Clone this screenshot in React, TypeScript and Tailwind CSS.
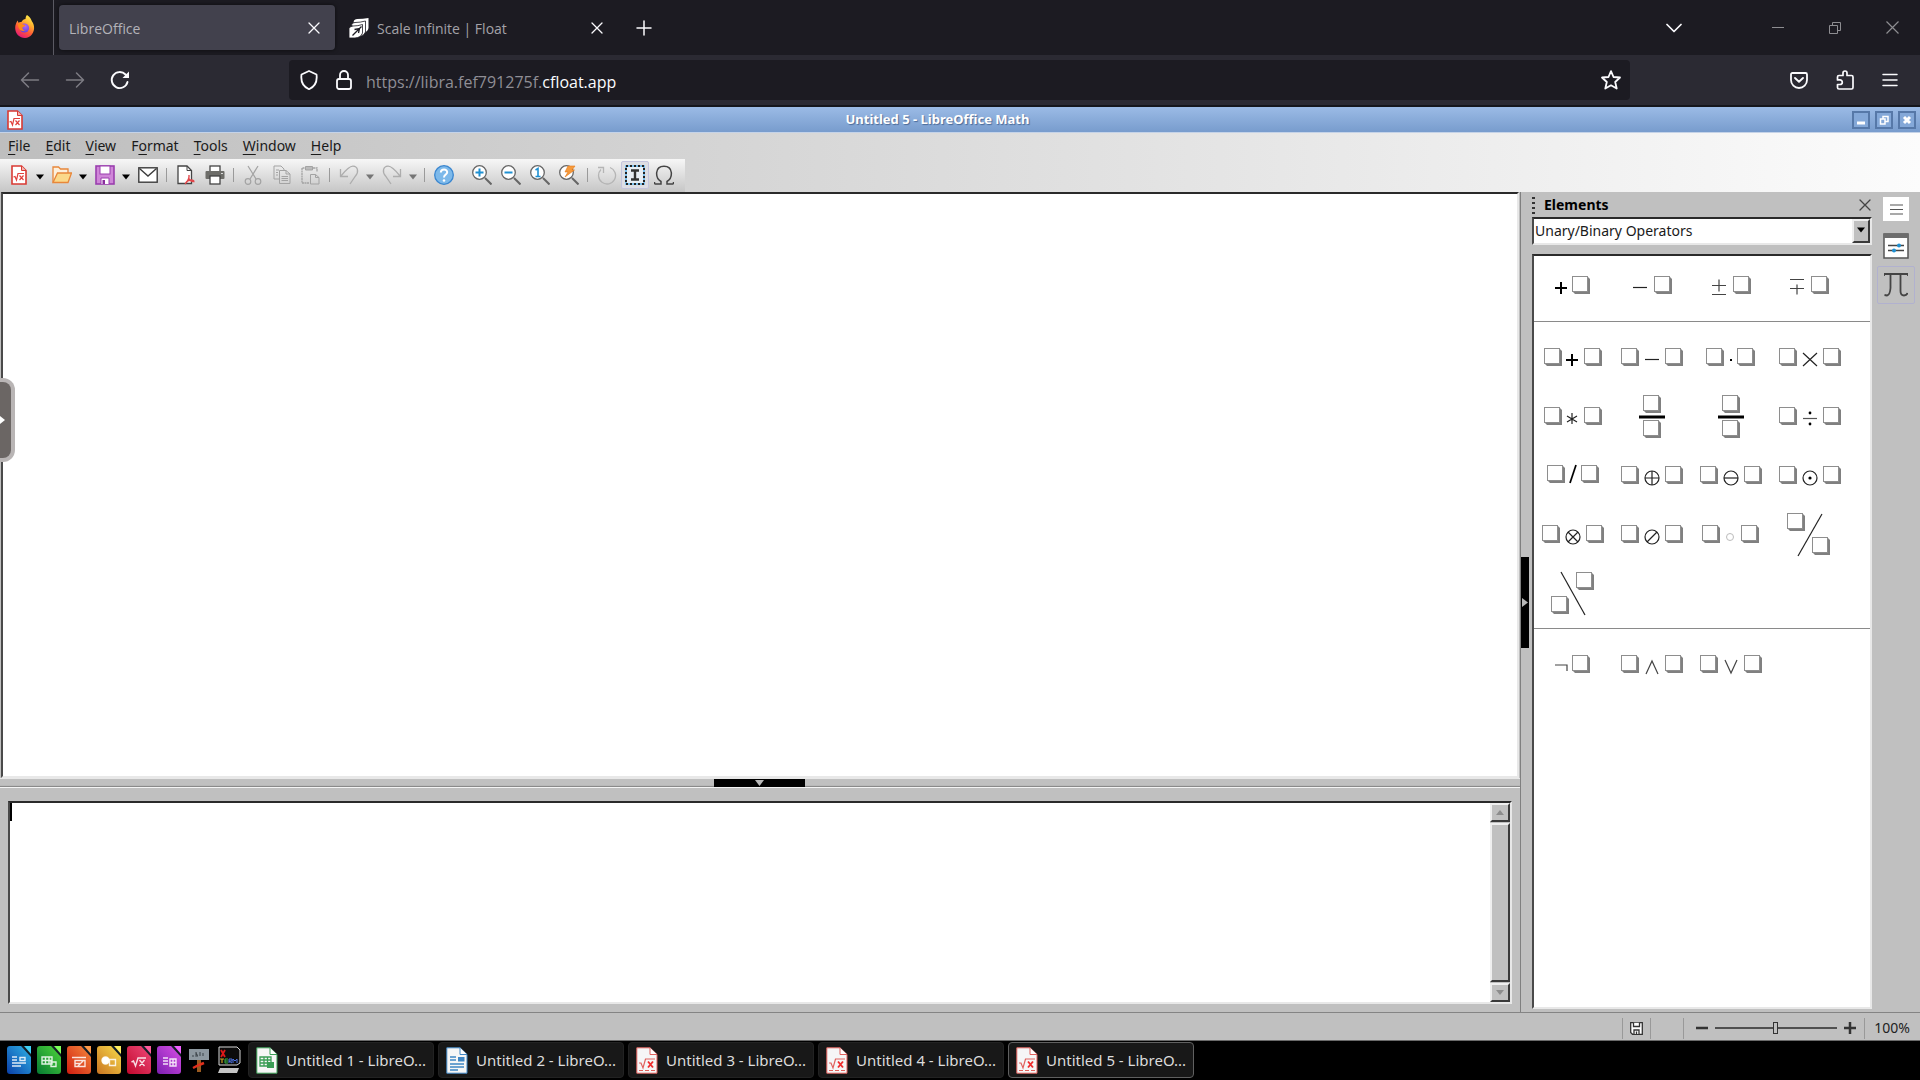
import React from 'react';

const ui = "font-['Noto_Sans','Open_Sans',sans-serif]";
const chrome = "font-['Open_Sans','Noto_Sans',sans-serif]";

/* ---------- Browser icons ---------- */

const FirefoxIcon = () => (
  <svg width="22" height="26" viewBox="0 0 22 26">
    <defs>
      <linearGradient id="fxBody" x1="0.8" y1="0" x2="0.3" y2="1">
        <stop offset="0" stopColor="#fff44f" />
        <stop offset="0.35" stopColor="#ffb02e" />
        <stop offset="0.65" stopColor="#ff5a36" />
        <stop offset="1" stopColor="#e3167a" />
      </linearGradient>
      <radialGradient id="fxCore" cx="0.6" cy="0.3" r="0.8">
        <stop offset="0" stopColor="#b067f5" />
        <stop offset="1" stopColor="#5a3fd6" />
      </radialGradient>
    </defs>
    <path d="M13 0c3 2 4 4 5 6.500c1 1 1.800 3 2 5c.8 6-3.500 11.500-9 11.500S1.200 18.700 1.200 13c0-3 1-5.500 2.600-7.500l.6 2.300c.9-.6 1.800-.8 3-.7C8.500 5 10 4 11.500 4c0-1.500.5-3 1.500-4z" fill="url(#fxBody)" />
    <circle cx="10.500" cy="13" r="4.600" fill="url(#fxCore)" />
    <path d="M4 9c2-1.500 4-.6 5 .6l2.500.4c-.5 1.600-2.200 1.700-3 2.300c-.5 1.500.5 3 2.500 3.200c-3 1.500-7-.500-7-6.500z" fill="#ff8a16" />
  </svg>
);

const FloatIcon = () => (
  <svg width="20" height="20" viewBox="0 0 20 20">
    <path d="M5 2.500Q6 1 8 1Q14 1 19.500 0V10Q19 13 15.500 14.500V5Q10 5.500 4.500 4.500Z" fill="#fff" />
    <path d="M2.500 7Q3 4.500 6 4.500Q11 4.500 16.500 3V14Q15.500 17 12 18Z" fill="#fff" stroke="#1c1b22" strokeWidth=".8" />
    <path d="M0 10.500Q1 8 4 8Q9 8 13.500 6.500V15Q12 19.500 6 20H0Z" fill="#fff" stroke="#1c1b22" strokeWidth=".8" />
    <path d="M3.500 17.500 12.500 8.500M5.500 11.500 10.500 10.500 9.500 15" fill="none" stroke="#1c1b22" strokeWidth="1.300" />
  </svg>
);

const line = { fill: 'none', stroke: 'currentColor', strokeWidth: 1.5, strokeLinecap: 'round', strokeLinejoin: 'round' } as const;

const XIcon = ({ size = 12 }: { size?: number }) => (
  <svg width={size} height={size} viewBox="0 0 12 12"><path d="M1 1 11 11M11 1 1 11" {...line} strokeWidth="1.300" /></svg>
);
const PlusIcon = () => (
  <svg width="16" height="16" viewBox="0 0 16 16"><path d="M8 1V15M1 8H15" {...line} /></svg>
);
const ArrowIcon = ({ flip = false }: { flip?: boolean }) => (
  <svg width="20" height="18" viewBox="0 0 20 18">
    <path d={flip ? 'M1.500 9H18.500M11.500 2 18.500 9 11.500 16' : 'M18.500 9H1.500M8.500 2 1.500 9 8.500 16'} {...line} />
  </svg>
);
const ReloadIcon = () => (
  <svg width="20" height="20" viewBox="0 0 20 20">
    <path d="M17.500 12A8 8 0 1 1 15.500 4.500L17.500 6.500" {...line} strokeWidth="1.900" />
    <path d="M19 1.500V8H12.500Z" fill="currentColor" />
  </svg>
);
const ShieldIcon = () => (
  <svg width="20" height="20" viewBox="0 0 20 20"><path d="M10 1 17.500 4.500C18.500 12 15 17 10 19.200C5 17 1.500 12 2.500 4.500Z" {...line} strokeWidth="1.800" /></svg>
);
const LockIcon = () => (
  <svg width="16" height="20" viewBox="0 0 16 20">
    <rect x="1" y="9" width="14" height="10" rx="2" {...line} strokeWidth="1.800" />
    <path d="M4 9V5a4 4 0 0 1 8 0V9" {...line} strokeWidth="1.800" />
  </svg>
);
const StarIcon = () => (
  <svg width="20" height="20" viewBox="0 0 20 20"><path d="M10 1.200 12.500 7 19 7.500 14.200 12 15.700 18.500 10 15.300 4.300 18.500 5.800 12 1 7.500 7.500 7Z" {...line} strokeWidth="1.800" /></svg>
);
const PocketIcon = () => (
  <svg width="18" height="17" viewBox="0 0 18 17">
    <path d="M2.500 1H15.500Q17 1 17 2.500V8A8 8 0 0 1 1 8V2.500Q1 1 2.500 1Z" {...line} strokeWidth="1.800" />
    <path d="M5 6 9 9.700 13 6" {...line} strokeWidth="1.900" />
  </svg>
);
const PuzzleIcon = () => (
  <svg width="18" height="20" viewBox="0 0 18 20">
    <path d="M7 5.500V3a2 2 0 0 1 4 0V5.500H15.500Q17 5.500 17 7V17.500Q17 19 15.500 19H3Q1.500 19 1.500 17.500V14.500H4a2.300 2.300 0 0 0 0-4.600H1.500V7Q1.500 5.500 3 5.500Z" {...line} strokeWidth="1.700" />
  </svg>
);

/* ---------- Office icons ---------- */

const MathDoc = () => (
  <svg width="16" height="20" viewBox="0 0 16 20">
    <path d="M1 1H10.500L15 5.500V19H1Z" fill="#fff" stroke="#d93a33" strokeWidth="1.600" />
    <path d="M10.500 1V5.500H15" fill="#f3b5b1" stroke="#d93a33" />
    <path d="M2.500 12 4 11.500 5.500 15 7 8.500H13M8.500 10.500 12.500 15M12.500 10.500 8.500 15" fill="none" stroke="#e0403c" strokeWidth="1.200" />
  </svg>
);

const Caret = ({ muted = false }: { muted?: boolean }) => (
  <svg width="8" height="6" viewBox="0 0 8 6"><path d="M0 .5H8L4 5.500Z" fill={muted ? '#757575' : '#000'} /></svg>
);

const FolderIcon = () => (
  <svg width="20" height="18" viewBox="0 0 20 18">
    <path d="M1 16.500V1H6.500L8.500 3H16V7" fill="#fdf0dc" stroke="#e8873a" strokeWidth="1.300" />
    <path d="M1 16.500 5.500 7H19.500L16 16.500Z" fill="#fbd98a" stroke="#e8873a" strokeWidth="1.300" />
  </svg>
);
const SaveIcon = () => (
  <svg width="20" height="20" viewBox="0 0 20 20">
    <rect x="1" y="1" width="18" height="18" fill="#cf86d8" stroke="#9a3fae" strokeWidth="1.600" />
    <rect x="5" y="1" width="10" height="8" fill="#fff" stroke="#9a3fae" />
    <path d="M6 19V13H14V19" fill="#fff" stroke="#9a3fae" />
    <rect x="7.500" y="15" width="2.500" height="4" fill="#8a2f9e" />
  </svg>
);
const MailIcon = () => (
  <svg width="20" height="16" viewBox="0 0 20 16">
    <rect x=".8" y=".8" width="18.400" height="14.400" fill="#fff" stroke="#3c3c3c" strokeWidth="1.400" />
    <path d="M1.500 1.500 10 9 18.500 1.500" fill="none" stroke="#3c3c3c" strokeWidth="1.400" />
  </svg>
);
const PdfIcon = () => (
  <svg width="18" height="20" viewBox="0 0 18 20">
    <path d="M1 1H10L14.500 5.500V18.500H1Z" fill="#fff" stroke="#444" strokeWidth="1.300" />
    <path d="M10 1V5.500H14.500" fill="none" stroke="#444" />
    <path d="M8 19C11 16 12.500 13 12 10M11.500 13C13 16 15 17 17.500 16.500M9 17C12 15 15 14.500 17 16" fill="none" stroke="#e2474b" strokeWidth="1.400" />
  </svg>
);
const PrintIcon = () => (
  <svg width="20" height="20" viewBox="0 0 20 20">
    <rect x="5" y="1" width="10" height="6" fill="#fff" stroke="#444" strokeWidth="1.300" />
    <rect x=".5" y="6" width="19" height="8" rx="1" fill="#6d6d69" />
    <rect x="5" y="11" width="10" height="8" fill="#fff" stroke="#444" strokeWidth="1.300" />
    <rect x="16" y="8" width="2" height="1" fill="#ddd" />
  </svg>
);
const CutIcon = () => (
  <svg width="18" height="20" viewBox="0 0 18 20" fill="none" stroke="#a3a3a3" strokeWidth="1.200">
    <path d="M4 1 12 14M14 1 6 14" /><circle cx="4" cy="16.500" r="2.800" /><circle cx="14" cy="16.500" r="2.800" />
  </svg>
);
const CopyIcon = () => (
  <svg width="18" height="20" viewBox="0 0 18 20" fill="none" stroke="#a3a3a3">
    <path d="M6 14H1V1H8L11 4V5" /><path d="M6.500 5.500H13L17 9V18.500H6.500ZM13 5.500V9H17M8.500 11.500H15M8.500 13.500H15M8.500 15.500H15M3 5H6M3 7.500H5M3 10H5" />
  </svg>
);
const PasteIcon = () => (
  <svg width="19" height="20" viewBox="0 0 19 20" fill="none" stroke="#a3a3a3">
    <path d="M8 18H1V3H4M12 3H16V7" strokeDasharray="2 .5" strokeWidth="1.300" /><path d="M4.500 1.500H11.500V5H4.500Z" fill="#bbb" /><path d="M9.500 9.500H14.500L18 12.500V19H9.500ZM14.500 9.500V12.500H18" />
  </svg>
);
const UndoIcon = ({ flip = false }: { flip?: boolean }) => (
  <svg width="20" height="20" viewBox="0 0 20 20">
    <path d={flip ? 'M18.500 4V11.500H11M18 11C14 6 10 1 6 1.200C1 1.500 0 7 3.500 11L9 19' : 'M1.500 4V11.500H9M2 11C6 6 10 1 14 1.200C19 1.500 20 7 16.500 11L11 19'} fill="none" stroke="#adadad" strokeWidth="1.300" />
  </svg>
);
const HelpIcon = () => (
  <svg width="20" height="20" viewBox="0 0 20 20">
    <circle cx="10" cy="10" r="9.300" fill="#7db9ea" stroke="#3a86cf" strokeWidth="1.300" />
    <path d="M6.800 7.500C7 3.500 13.200 3.500 13.200 7.300C13.200 9.500 10 9.800 10 12.500" fill="none" stroke="#fff" strokeWidth="2" />
    <circle cx="10" cy="15.500" r="1.300" fill="#fff" />
  </svg>
);

const Lens = ({ children }: { children: React.ReactNode }) => (
  <svg width="20" height="20" viewBox="0 0 20 20">
    <path d="M13 13 19.500 19.500" stroke="#666" strokeWidth="2" />
    <circle cx="7.500" cy="7.500" r="6.800" fill="#fff" stroke="#666" strokeWidth="1.300" />
    {children}
  </svg>
);
const RefreshIcon = () => (
  <svg width="20" height="20" viewBox="0 0 20 20" fill="none" stroke="#b5b5b5" strokeWidth="1.300">
    <path d="M13 2.500A8.500 8.500 0 1 1 4 4.500M1 2.500H6.500V8" />
  </svg>
);
const FormulaCursorIcon = () => (
  <svg width="20" height="20" viewBox="0 0 20 20">
    <rect x="1" y="1" width="18" height="18" fill="#e9eef4" stroke="#7cc0ee" strokeWidth="2" />
    <rect x="1" y="1" width="18" height="18" fill="none" stroke="#222" strokeWidth="2" strokeDasharray="2 2" />
    <path d="M6 5.500H14M6 14.500H14M10 5V15" stroke="#333" strokeWidth="2.400" />
  </svg>
);
const OmegaIcon = () => (
  <svg width="20" height="20" viewBox="0 0 20 20">
    <path d="M.5 19H7V16.500C1 13 .500 1.200 10 1.200S19 13 13 16.500V19H19.500M.5 19V17M19.500 19V17" fill="none" stroke="#444" strokeWidth="1.500" />
  </svg>
);

/* ---------- Operator previews ---------- */

const Box = ({ x, y = -10 }: { x: number; y?: number }) => (
  <g transform={`translate(${x} ${y})`}>
    <path d="M1 15H15V1H16L18 3V18H3L1 16Z" fill="#808080" />
    <rect x=".5" y=".5" width="15" height="15" fill="#fff" stroke="#8e8e8e" />
  </g>
);

const thin = { fill: 'none', stroke: '#222', strokeWidth: 1.2 };
const Pair = ({ l = -31, r = 13, y = -10, children }: { l?: number; r?: number; y?: number; children: React.ReactNode }) => (
  <><Box x={l} y={y} />{children}<Box x={r} y={y} /></>
);

interface Operator { name: string; art: React.ReactNode }

const unary: Operator[] = [
  { name: '+ Sign', art: <><path d="M-18 2H-6M-12 -4V8" {...thin} stroke="#000" strokeWidth="2" /><Box x={-1} /></> },
  { name: '- Sign', art: <><path d="M-19 1.500H-5" {...thin} /><Box x={2} /></> },
  { name: '+- Sign', art: <><path d="M-19 -.5H-5M-12 -6.500V5.500M-19 8.500H-5" {...thin} stroke="#444" /><Box x={2} /></> },
  { name: '-+ Sign', art: <><path d="M-20 -6.500H-6M-20 2.500H-6M-13 -1.500V8.500" {...thin} stroke="#444" /><Box x={1} /></> },
];

const binary: Operator[] = [
  { name: 'Addition', art: <Pair l={-29} r={11}><path d="M-7 2H5M-1 -4V8" {...thin} stroke="#000" strokeWidth="2" /></Pair> },
  { name: 'Subtraction', art: <Pair><path d="M-7 1.500H7" {...thin} /></Pair> },
  { name: 'Multiplication (Dot)', art: <Pair l={-25} r={6}><rect x="-1" y="1" width="2" height="2" /></Pair> },
  { name: 'Multiplication (x)', art: <Pair><path d="M-7 -5 7 8M7 -5-7 8" {...thin} /></Pair> },
  { name: 'Multiplication (*)', art: <Pair l={-29} r={11}><path d="M-1 -4V7M-6 -1 4 5M4 -1-6 5" {...thin} /></Pair> },
  { name: 'Division (Fraction)', art: <><Box x={-9} y={-22} /><path d="M-13 0H13" stroke="#000" strokeWidth="3" /><Box x={-9} y={3} /></> },
  { name: 'Division over', art: <><Box x={-9} y={-22} /><path d="M-13 0H13" stroke="#000" strokeWidth="3" /><Box x={-9} y={3} /></> },
  { name: 'Division (Wide)', art: <Pair><path d="M-7 1.500H7" {...thin} stroke="#555" /><circle cy="-4" r="1.400" /><circle cy="7" r="1.400" /></Pair> },
  { name: 'Division (Slash)', art: <Pair l={-26} r={8} y={-11}><path d="M-3 7 3 -11" {...thin} stroke="#000" strokeWidth="1.700" /></Pair> },
  { name: 'Circled Plus', art: <Pair><circle cy="2" r="7" {...thin} /><path d="M-7 2H7M0 -5V9" {...thin} /></Pair> },
  { name: 'Circled Minus', art: <Pair><circle cy="2" r="7" {...thin} /><path d="M-7 2H7" {...thin} /></Pair> },
  { name: 'Circled Dot', art: <Pair><circle cy="2" r="7" {...thin} /><circle cy="2" r="1.600" /></Pair> },
  { name: 'Circled Times', art: <Pair><circle cy="2" r="7" {...thin} /><path d="M-5 -3 5 7M5 -3-5 7" {...thin} /></Pair> },
  { name: 'Circled Slash', art: <Pair><circle cy="2" r="7" {...thin} /><path d="M5 -3-5 7" {...thin} /></Pair> },
  { name: 'Concatenate', art: <Pair l={-29} r={10}><circle cx="-1" cy="2" r="3.500" fill="none" stroke="#bbb" /></Pair> },
  { name: 'Wide Slash', art: <><Box x={-23} y={-22} /><path d="M12 -21-12 21" {...thin} /><Box x={2} y={2} /></> },
  { name: 'Wide Backslash', art: <><Box x={3} y={-22} /><path d="M-12 -22 12 21" {...thin} /><Box x={-22} y={2} /></> },
];

const logic: Operator[] = [
  { name: 'Boolean NOT', art: <><path d="M-18 0H-6V6" {...thin} stroke="#444" /><Box x={-1} /></> },
  { name: 'Boolean AND', art: <Pair><path d="M-6 9 0 -4 6 9" {...thin} stroke="#444" /></Pair> },
  { name: 'Boolean OR', art: <Pair><path d="M-6 -5 0 8 6 -5" {...thin} stroke="#444" /></Pair> },
];

const OperatorGrid = ({ items }: { items: Operator[] }) => (
  <div className="flex flex-wrap">
    {items.map((op) => (
      <button key={op.name} aria-label={op.name} className="w-[79px] h-[59px]">
        <svg width="78" height="58" viewBox="-39 -29 78 58">{op.art}</svg>
      </button>
    ))}
  </div>
);

/* ---------- Browser chrome ---------- */

const Browser = () => (
  <header className={`${chrome} shrink-0 text-[#fbfbfe]`}>
    <div className="flex h-[55px] items-center bg-[#1c1b22]">
      <div className="flex h-full w-[54px] items-center justify-center border-r border-[#5b5a63] pr-1">
        <FirefoxIcon />
      </div>
      <div className="ml-[5px] flex h-[45px] w-[276px] items-center justify-between rounded bg-[#42414d] pl-2.5 pr-[15px] shadow-[0_0_4px_rgba(0,0,0,0.6)]">
        <span className="pt-0.5 text-sm text-[#b4b3b9]">LibreOffice</span>
        <button aria-label="Close tab"><XIcon /></button>
      </div>
      <div className="flex h-[45px] w-[283px] items-center pl-[14px] pr-[15px]">
        <FloatIcon />
        <span className="ml-2 flex-1 pt-0.5 text-sm text-[#a3a2a8]">Scale Infinite | Float</span>
        <button aria-label="Close tab"><XIcon /></button>
      </div>
      <button aria-label="New tab" className="ml-[18px]"><PlusIcon /></button>
      <div className="ml-auto flex items-center pr-[21px]">
        <button aria-label="List all tabs" className="mr-[90px]">
          <svg width="16" height="10" viewBox="0 0 16 10"><path d="M1 1.500 8 8.500 15 1.500" {...line} strokeWidth="1.700" /></svg>
        </button>
        <div className="flex items-center gap-[45px] text-[#8d8d91]">
          <button aria-label="Minimize"><svg width="12" height="12" viewBox="0 0 12 12"><path d="M0 5.500H12" stroke="currentColor" /></svg></button>
          <button aria-label="Restore">
            <svg width="12" height="12" viewBox="0 0 12 12" fill="none" stroke="currentColor"><path d="M.5 3.500H8.500V11.500H.5ZM3.500 3.500V.5H11.500V8.500H8.500" /></svg>
          </button>
          <button aria-label="Close"><svg width="13" height="13" viewBox="0 0 13 13"><path d="M.5.5 12.500 12.500M12.500.5.5 12.500" stroke="currentColor" strokeWidth="1.200" /></svg></button>
        </div>
      </div>
    </div>

    <div className="flex h-[50px] items-center bg-[#2b2a33] pl-5 pr-[22px]">
      <div className="flex w-[269px] items-center gap-[25px]">
        <button aria-label="Back" className="text-[#7d7c83]"><ArrowIcon /></button>
        <button aria-label="Forward" className="text-[#7d7c83]"><ArrowIcon flip /></button>
        <button aria-label="Reload"><ReloadIcon /></button>
      </div>
      <div className="flex h-10 flex-1 items-center rounded bg-[#1c1b22] pl-2.5 pr-[9px]">
        <ShieldIcon />
        <span className="ml-[17px]"><LockIcon /></span>
        <a href="https://libra.fef791275f.cfloat.app" className="ml-[14px] flex-1 pt-1 text-base text-[#8f8e95]">
          https://libra.fef791275f.<span className="text-[#fbfbfe]">cfloat.app</span>
        </a>
        <button aria-label="Bookmark this page"><StarIcon /></button>
      </div>
      <div className="ml-40 flex items-center gap-7">
        <button aria-label="Save to Pocket"><PocketIcon /></button>
        <button aria-label="Extensions"><PuzzleIcon /></button>
        <button aria-label="Menu"><svg width="16" height="14" viewBox="0 0 16 14"><path d="M1 1.500H15M1 7H15M1 12.500H15" {...line} /></svg></button>
      </div>
    </div>
  </header>
);

/* ---------- Window title, menus, toolbar ---------- */

const winBtn = 'flex size-[18px] items-center justify-center border-2 border-[#5678a8] bg-[#84a8d8]';

const TitleBar = () => (
  <div className="flex h-[28px] shrink-0 items-center border-t-2 border-b border-t-[#15161c] border-b-[#c5d3e8] bg-linear-to-b from-[#9bbbe6] to-[#789ccd] pl-[7px] pr-1">
    <MathDoc />
    <h1 className={`${ui} flex-1 text-center text-[13px] font-bold text-white [text-shadow:1px_1px_1px_#4a6a98]`}>Untitled 5 - LibreOffice Math</h1>
    <div className="flex gap-[5px]">
      <button aria-label="Minimize window" className={winBtn}><svg width="10" height="10"><path d="M1 8H9" stroke="#fff" strokeWidth="3" /></svg></button>
      <button aria-label="Restore window" className={winBtn}><svg width="10" height="10" fill="none" stroke="#fff" strokeWidth="1.500"><path d="M1.500 4H6V9H1.500ZM4 4V1.500H9V6.500H6" /></svg></button>
      <button aria-label="Close window" className={winBtn}><svg width="10" height="10"><path d="M2 2 8 8M8 2 2 8" stroke="#fff" strokeWidth="3" /></svg></button>
    </div>
  </div>
);

const menus: [string, string, string][] = [
  ['', 'F', 'ile'], ['', 'E', 'dit'], ['', 'V', 'iew'], ['F', 'o', 'rmat'], ['', 'T', 'ools'], ['', 'W', 'indow'], ['', 'H', 'elp'],
];

const MenuBar = () => (
  <nav className={`${ui} flex h-[26px] items-center gap-[15px] pl-2 text-sm text-[#1a1a1a]`}>
    {menus.map(([a, key, b]) => (
      <button key={key + b}>{a}<span className="underline underline-offset-3">{key}</span>{b}</button>
    ))}
  </nav>
);

const Tool = ({ label, children }: { label: string; children: React.ReactNode }) => (
  <button aria-label={label} className="flex w-[29px] shrink-0 items-center justify-center">{children}</button>
);
const Drop = ({ label, muted }: { label: string; muted?: boolean }) => (
  <button aria-label={label} className="flex w-[14px] shrink-0 items-center justify-center pt-1"><Caret muted={muted} /></button>
);
const Sep = () => <span className="mx-1 h-[14px] w-px shrink-0 bg-[#9a9a9a]" />;

const Toolbar = () => (
  <div className="flex h-[33px] w-fit items-center bg-linear-to-b from-[#f7f7f7] to-[#c6c6c6] pl-1 pr-[7px] pb-0.5">
    <Tool label="New"><MathDoc /></Tool><Drop label="New options" />
    <Tool label="Open"><FolderIcon /></Tool><Drop label="Recent files" />
    <Tool label="Save"><SaveIcon /></Tool><Drop label="Save options" />
    <Tool label="Send by email"><MailIcon /></Tool>
    <Sep />
    <Tool label="Export as PDF"><PdfIcon /></Tool>
    <Tool label="Print"><PrintIcon /></Tool>
    <Sep />
    <Tool label="Cut"><CutIcon /></Tool>
    <Tool label="Copy"><CopyIcon /></Tool>
    <Tool label="Paste"><PasteIcon /></Tool>
    <Sep />
    <Tool label="Undo"><UndoIcon /></Tool><Drop label="Undo list" muted />
    <Tool label="Redo"><UndoIcon flip /></Tool><Drop label="Redo list" muted />
    <Sep />
    <Tool label="Help"><HelpIcon /></Tool>
    <span className="w-[9px]" />
    <Tool label="Zoom in"><Lens><path d="M3.500 7.500H11.500M7.500 3.500V11.500" stroke="#1e90d2" strokeWidth="2" /></Lens></Tool>
    <Tool label="Zoom out"><Lens><path d="M3.500 7.500H11.500" stroke="#1e90d2" strokeWidth="2" /></Lens></Tool>
    <Tool label="Zoom 100%"><Lens><path d="M5.500 5 8 3.500V12M5.500 11.500H10.500" fill="none" stroke="#1e90d2" strokeWidth="1.600" /></Lens></Tool>
    <Tool label="Show all"><Lens><path d="M9 1H16L13 5H15.500L6 12 9 7H6Z" fill="#f59a3c" stroke="#e67817" strokeWidth=".6" /></Lens></Tool>
    <Sep />
    <Tool label="Update"><RefreshIcon /></Tool>
    <button aria-label="Formula cursor" className="flex h-7 w-[28px] items-center justify-center rounded-xs border border-[#c4c4de] bg-[#dedee4]"><FormulaCursorIcon /></button>
    <Tool label="Symbols"><OmegaIcon /></Tool>
  </div>
);

/* ---------- Workspace ---------- */

const raised = 'border-2 border-t-[#efefef] border-l-[#efefef] border-r-[#3a3a3a] border-b-[#3a3a3a] bg-[#c0c0c0]';
const sunken = 'border-2 border-t-[#2a2a2a] border-l-[#4a4a4a] border-r-[#e8e8e8] border-b-[#e8e8e8] bg-white';

const Workspace = () => (
  <main className="flex min-w-0 flex-1 flex-col">
    <section aria-label="Formula view" className={`${sunken} relative mr-px ml-px flex-1`}>
      {/* remote desktop control handle */}
      <button aria-label="Show control bar" className="absolute -left-[3px] top-[184px] flex h-[84px] w-[15px] items-center rounded-r-xl border-4 border-l-0 border-[#b9b5b5] bg-[#6b6664]">
        <svg width="6" height="10" viewBox="0 0 6 10"><path d="M0 1 5 5 0 9Z" fill="#fff" /></svg>
      </button>
    </section>
    <div className="flex h-[10px] shrink-0 items-center justify-center border-t border-b border-t-[#e8e8e8] border-b-[#f4f4f4] bg-linear-to-b from-[#c0c0c0] from-80% to-[#8a8a8a] to-90% pr-0.5">
      <button aria-label="Hide command window" className="flex h-2 w-[91px] items-center justify-center bg-black">
        <svg width="9" height="6" viewBox="0 0 9 6"><path d="M0 0H9L4.500 6Z" fill="#b8b8b8" /></svg>
      </button>
    </div>
    <div className="flex h-[224px] shrink-0 px-2 pt-[13px] pb-2">
      <div className={`${sunken} relative flex flex-1`}>
        <textarea aria-label="Commands" className="h-full flex-1 resize-none p-0.5 outline-none" />
        <span className="absolute left-0 top-0 h-[18px] w-0.5 bg-black" />
        <div className="flex w-5 flex-col gap-px bg-[#c0c0c0]">
          <button aria-label="Scroll up" className={`${raised} flex h-[19px] items-center justify-center`}>
            <svg width="8" height="5"><path d="M0 5 4 0 8 5Z" fill="#8c8c8c" /></svg>
          </button>
          <div className={`${raised} flex-1`} />
          <button aria-label="Scroll down" className={`${raised} flex h-[19px] items-center justify-center`}>
            <svg width="8" height="5"><path d="M0 0H8L4 5Z" fill="#8c8c8c" /></svg>
          </button>
        </div>
      </div>
    </div>
  </main>
);

const Sidebar = () => (
  <aside className={`${ui} flex w-[344px] shrink-0 flex-col pb-[3px]`}>
    <div className="flex h-[25px] shrink-0 items-center pl-[4px] pr-px">
      <svg width="3" height="18" viewBox="0 0 3 18"><path d="M1.500 1V18" stroke="#333" strokeWidth="3" strokeDasharray="2 3" /></svg>
      <h2 className="ml-[9px] flex-1 text-sm font-bold text-black">Elements</h2>
      <button aria-label="Close sidebar" className="text-[#444]"><XIcon /></button>
    </div>
    <div className={`${sunken} ml-1 flex h-7 shrink-0`}>
      <select aria-label="Element category" defaultValue="ub" className="min-w-0 flex-1 appearance-none bg-white pl-px text-sm text-[#1a1a1a] outline-none">
        <option value="ub">Unary/Binary Operators</option>
        <option>Relations</option>
        <option>Set Operations</option>
        <option>Functions</option>
      </select>
      <span className={`${raised} flex w-[18px] items-center justify-center pb-0.5`}><Caret /></span>
    </div>
    <div className={`${sunken} ml-1 mt-[9px] flex-1 overflow-hidden`}>
      <OperatorGrid items={unary} />
      <div className="mt-[6px] border-t border-[#8a8a8a] pt-[6px]"><OperatorGrid items={binary} /></div>
      <div className="mt-[5px] border-t border-[#8a8a8a] pt-[6px]"><OperatorGrid items={logic} /></div>
    </div>
  </aside>
);

const TabBar = () => (
  <div className="flex w-12 shrink-0 flex-col items-center pt-[5px]">
    <button aria-label="Sidebar settings" className="flex h-6 w-[26px] items-center justify-center bg-white">
      <svg width="13" height="11" viewBox="0 0 13 11"><path d="M0 1H13M0 5.500H13M0 10H13" stroke="#555" strokeWidth="1.200" /></svg>
    </button>
    <button aria-label="Properties" className="mt-3">
      <svg width="26" height="26" viewBox="0 0 26 26">
        <rect x="1" y="1" width="24" height="24" fill="#fff" stroke="#555" strokeWidth="1.500" />
        <rect x="1" y="1" width="24" height="4" fill="#6d6d6d" />
        <path d="M5 12.500H21M5 17.500H21" stroke="#444" strokeWidth="1.300" />
        <circle cx="16" cy="12.500" r="2" fill="#1e90d2" /><circle cx="11" cy="17.500" r="2" fill="#1e90d2" />
      </svg>
    </button>
    <button aria-label="Elements" className="mt-[7px] flex h-[38px] w-[38px] items-center justify-center rounded-xs border border-[#b1b1cf]">
      <svg width="24" height="24" viewBox="0 0 24 24" fill="none" stroke="#444" strokeWidth="1.800">
        <path d="M0 3V1H24V3M6.500 1V15Q6 22 3 22.500L.5 22M16.500 1V18Q16.500 22.500 20 22.500Q23 22.500 23.500 20" />
      </svg>
    </button>
  </div>
);

const StatusBar = () => (
  <footer className={`${ui} flex h-[29px] shrink-0 items-center border-t border-b border-t-[#848484] border-b-[#6a6a6a] bg-[#c0c0c0] pr-2.5 pt-[3px] text-sm text-[#222]`}>
    <span className="ml-auto h-[21px] w-px bg-[#999]" />
    <span className="flex w-[27px] justify-center">
      <svg width="13" height="13" viewBox="0 0 13 13" fill="#fff" stroke="#333" strokeWidth="1.300"><path d="M.7.7H12.300V12.300H2.500L.7 10.500Z" /><path d="M3.500.7V4.500H9.500V.7M4 12V8H9V12M6.500 9.500V12" /></svg>
    </span>
    <span className="h-[21px] w-px bg-[#999]" />
    <span className="ml-8 h-[21px] w-px bg-[#999]" />
    <button aria-label="Zoom out view" className="ml-3"><svg width="12" height="12"><path d="M0 6H12" stroke="#333" strokeWidth="2.500" /></svg></button>
    <input
      type="range"
      aria-label="Zoom factor"
      min={0}
      max={100}
      defaultValue={49}
      className="mx-[7px] h-3 w-[122px] appearance-none bg-linear-to-b from-transparent from-40% via-black via-50% to-transparent to-60% [&::-webkit-slider-thumb]:h-3 [&::-webkit-slider-thumb]:w-[5px] [&::-webkit-slider-thumb]:appearance-none [&::-webkit-slider-thumb]:border [&::-webkit-slider-thumb]:border-[#333] [&::-webkit-slider-thumb]:bg-[#c0c0c0]"
    />
    <button aria-label="Zoom in view"><svg width="12" height="12"><path d="M0 6H12M6 0V12" stroke="#333" strokeWidth="2.500" /></svg></button>
    <span className="ml-2 mr-[9px] h-[21px] w-px bg-[#999]" />
    <span>100%</span>
  </footer>
);

/* ---------- Taskbar ---------- */

const launchers = [
  { name: 'Writer', top: '#2fb4e6', bottom: '#0a3fa8', fold: '#3fd0f5', art: <path d="M5 11H10M5 14H10M5 17H19M5 20H14M13 11.500H18V14.500H13Z" /> },
  { name: 'Calc', top: '#4fd63a', bottom: '#067a33', fold: '#7dff5a', art: <path d="M5 11H15V18H5ZM5 14.500H15M8.500 11V18M12 11V18M14 16H19V20.500H14Z" /> },
  { name: 'Impress', top: '#f58a3c', bottom: '#d01c10', fold: '#ff9a4a', art: <path d="M5 11.500H19M8 14.500H18V20.500H8ZM8 17.500H13M11 20 16 15" /> },
  { name: 'Draw', top: '#f8dc4a', bottom: '#c97422', fold: '#ffee60', art: <><circle cx="8.500" cy="14.500" r="3.500" fill="#fff" /><path d="M12.500 13.500H18.500V19.500H12.500Z" /></> },
  { name: 'Math', top: '#ee4a7a', bottom: '#c2082c', fold: '#ff5a9a', art: <path d="M4.500 16 6.500 15 8.500 20 11 12H19M12.500 14 17.500 20M17.500 14 12.500 20" /> },
  { name: 'Base', top: '#d84fe6', bottom: '#7c1fb0', fold: '#f060ff', art: <path d="M6 12H11M6 15H11M6 18H11M13 13H19V20H13ZM13 16.500H19M16 13V20" /> },
];

const TaskDoc = ({ kind }: { kind: 'calc' | 'writer' | 'math' }) => {
  const color = { calc: '#3a9d55', writer: '#3f86c4', math: '#e0605c' }[kind];
  return (
    <svg width="22" height="27" viewBox="0 0 22 27" className="shrink-0">
      <path d="M.8.8H14L21 7.500V26.200H.8Z" fill="#f6f6f6" stroke={color} />
      <path d="M14 .8V7.500H21" fill="#fff" stroke={color} />
      {kind === 'calc' && <><path d="M4 10H15V19H4ZM4 13H15M4 16H15M8 10V19M11.500 10V19" fill="none" stroke={color} strokeWidth="1.300" /><path d="M11 15H18V21H11Z" fill={color} /></>}
      {kind === 'writer' && <><path d="M4 10H10M4 13H10M4 17H18M4 20H18M4 23H12" fill="none" stroke={color} strokeWidth="1.300" /><path d="M12 10H18.500V14.500H12Z" fill={color} /></>}
      {kind === 'math' && <><path d="M3 16H5L7 21 9.500 12H19" fill="none" stroke="#e0605c" strokeWidth="1.200" /><path d="M12 14.500 17 20.500M17 14.500 12 20.500" stroke="#f02f2f" strokeWidth="1.900" /><path d="M3 23.500H7M9 23.500H13M15 23.500H19" stroke="#e0605c" strokeWidth="1.200" /></>}
    </svg>
  );
};

const tasks: { title: string; kind: 'calc' | 'writer' | 'math' }[] = [
  { title: 'Untitled 1 - LibreO...', kind: 'calc' },
  { title: 'Untitled 2 - LibreO...', kind: 'writer' },
  { title: 'Untitled 3 - LibreO...', kind: 'math' },
  { title: 'Untitled 4 - LibreO...', kind: 'math' },
  { title: 'Untitled 5 - LibreO...', kind: 'math' },
];

const Taskbar = () => (
  <div className={`${ui} flex h-[39px] shrink-0 items-center bg-black pl-[7px] pb-px`}>
    <div className="flex w-[241px] gap-[6px]">
      {launchers.map((l) => (
        <button key={l.name} aria-label={l.name}>
          <svg width="24" height="28" viewBox="0 0 24 28">
            <defs>
              <linearGradient id={`g${l.name}`} x1="1" y1="0" x2="0" y2="1">
                <stop offset="0" stopColor={l.top} /><stop offset="1" stopColor={l.bottom} />
              </linearGradient>
            </defs>
            <rect width="24" height="28" rx="3" fill={`url(#g${l.name})`} />
            <path d="M14 0H24V11Z" fill="#15202a" />
            <path d="M17 0H24V8Z" fill={l.fold} />
            <g fill="none" stroke="#fff" strokeOpacity=".85" strokeWidth="1.400">{l.art}</g>
          </svg>
        </button>
      ))}
      <button aria-label="Tools">
        <svg width="24" height="28" viewBox="0 0 24 28">
          <rect x="2" y="3" width="20" height="11" fill="#8d98a0" />
          <path d="M5 10H7M9 6V10H11M13 10V6M16 7V10" stroke="#555f66" strokeWidth="1.500" />
          <rect x="10" y="14" width="4" height="12" fill="#9a5a20" />
          <path d="M6 22 12 19 17 17" stroke="#e0301c" strokeWidth="2.500" />
        </svg>
      </button>
      <button aria-label="XTerm">
        <svg width="24" height="28" viewBox="0 0 24 28">
          <path d="M2 1H20L23 4V17L20 19H2Z" fill="#0c0c0c" stroke="#d6d6d6" />
          <path d="M4 4 8 11M8 4 4 11" stroke="#e01818" strokeWidth="1.800" />
          <path d="M3 13H7M5 13V17" stroke="#d0a020" strokeWidth="1.200" /><path d="M8 13V17H11M8 13H11M8 15H11" stroke="#35b040" fill="none" /><path d="M12 17V13H15V15H12L15 17M16 17V13L18 15L20 13V17" stroke="#4a70e0" fill="none" />
          <path d="M3 22H22L20 27H1Z" fill="#c4c4c4" />
        </svg>
      </button>
    </div>
    <div className="flex gap-1">
      {tasks.map((t, i) => (
        <button
          key={t.title}
          className={`flex h-9 w-[186px] items-center gap-2 rounded border bg-[#181818] pl-[7px] text-[15px] whitespace-nowrap text-[#dcdcdc] ${i === tasks.length - 1 ? 'border-[#606060]' : 'border-[#222]'}`}
        >
          <TaskDoc kind={t.kind} />
          <span>{t.title}</span>
        </button>
      ))}
    </div>
  </div>
);

export default function App() {
  return (
    <div className="flex h-screen w-full flex-col overflow-hidden bg-[#c0c0c0]">
      <Browser />
      <TitleBar />
      <div className="shrink-0 bg-linear-to-r from-[#bebebe] to-[#fcfcfc]">
        <MenuBar />
        <Toolbar />
      </div>
      <div className="flex min-h-0 flex-1">
        <Workspace />
        <div className="flex w-2 shrink-0 items-center border-l border-[#808080]">
          <button aria-label="Hide sidebar" className="flex h-[91px] w-2 shrink-0 items-center justify-center bg-black">
            <svg width="6" height="9" viewBox="0 0 6 9"><path d="M0 0 6 4.500 0 9Z" fill="#b8b8b8" /></svg>
          </button>
        </div>
        <Sidebar />
        <TabBar />
      </div>
      <StatusBar />
      <Taskbar />
    </div>
  );
}
